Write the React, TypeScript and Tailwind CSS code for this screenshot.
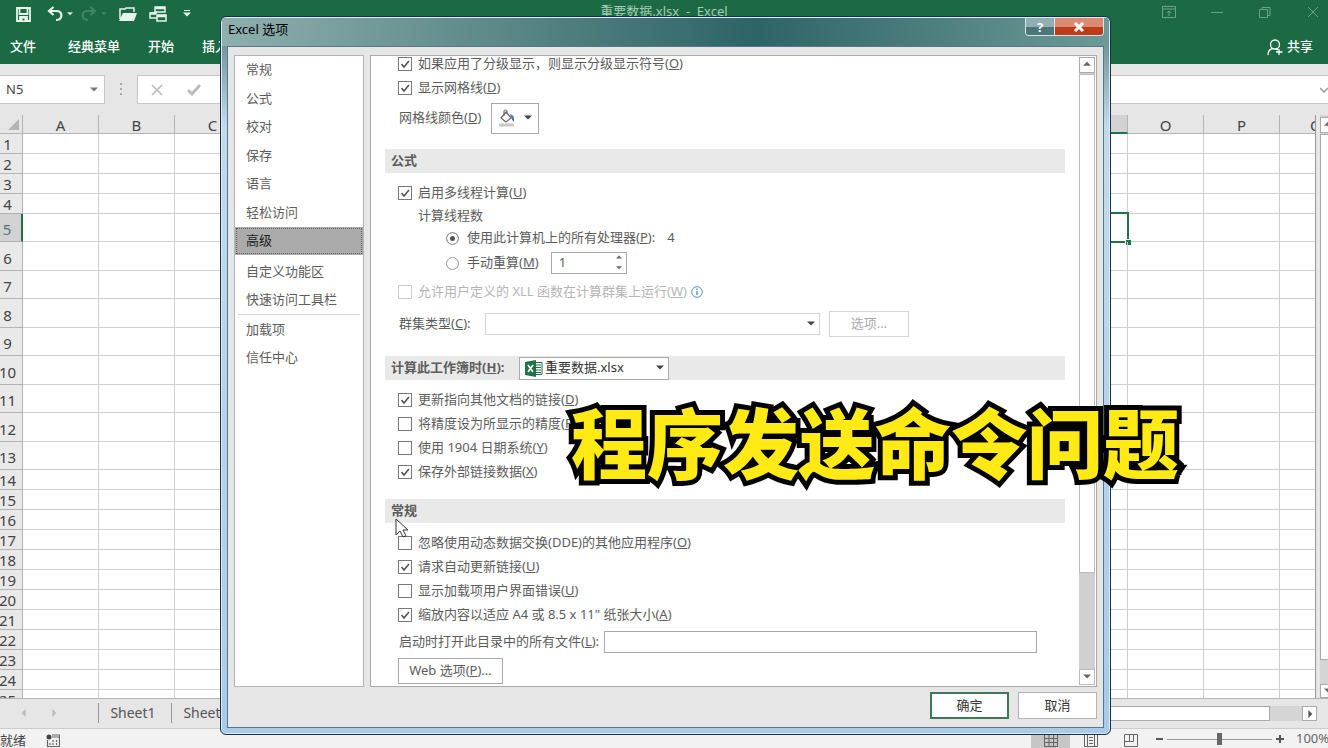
import { ReactNode } from "react";

const SHEET_ROWS = Array.from({ length: 25 }, (_, i) => i + 1);
const MIDDLE_COLUMNS = ["D", "E", "F", "G", "H", "I", "J", "K", "L", "M"];

const isTall = (row: number) => row >= 5 && row <= 13;

const rowHeight = (row: number) => {
  if (!isTall(row)) return "h-5";
  return row % 2 === 0 ? "h-[29px]" : "h-7";
};

const Triangle = ({ dir, className = "" }: { dir: "up" | "down" | "left" | "right"; className?: string }) => {
  const points = {
    up: "0,6 5,1 10,6",
    down: "0,2 10,2 5,7",
    left: "7,0 7,10 2,5",
    right: "3,0 3,10 8,5",
  };
  return (
    <svg viewBox="0 0 10 10" className={`size-2 shrink-0 fill-current ${className}`} aria-hidden="true">
      <polygon points={points[dir]} />
    </svg>
  );
};

const TitleBar = () => (
  <div className="flex h-7 items-center justify-between pl-4 text-[#e6f5ec]">
    <div className="flex items-center">
      <button aria-label="保存" className="mr-4">
        <svg width="15" height="15" viewBox="0 0 15 15" fill="none" stroke="currentColor" strokeWidth="1.8">
          <path d="M1 1h13v13H1zM3.5 1v6h8V1" />
          <path d="M4 10h7v4H4z" fill="currentColor" />
          <path d="M7.5 11.500v2" stroke="#1b6a43" />
        </svg>
      </button>
      <button aria-label="撤消" className="flex items-center gap-1">
        <svg width="16" height="16" viewBox="0 0 16 16" fill="none" stroke="currentColor" strokeWidth="2.200">
          <path d="M6.500 1L2 5l4.500 4M2 5h8c6 0 6 9-1 9" />
        </svg>
        <Triangle dir="down" className="size-[6px]" />
      </button>
      <button aria-label="恢复" className="ml-2 flex items-center gap-1 text-[#3f8762]">
        <svg width="16" height="16" viewBox="0 0 16 16" fill="none" stroke="currentColor" strokeWidth="2">
          <path d="M9.500 1L14 5 9.500 9M14 5H6c-6 0-6 9 1 9" />
        </svg>
        <Triangle dir="down" className="size-[6px]" />
      </button>
      <button aria-label="打开" className="ml-3">
        <svg width="18" height="15" viewBox="0 0 18 15">
          <path d="M1 12V2h5l1-1h8v4" fill="none" stroke="currentColor" strokeWidth="1.500" />
          <path d="M4 6h14l-3 8H0z" fill="currentColor" />
        </svg>
      </button>
      <button aria-label="切换窗口" className="ml-3">
        <svg width="18" height="16" viewBox="0 0 18 16" fill="none" stroke="currentColor" strokeWidth="1.500">
          <path d="M6 1h10v5H6zM8 9h9v6H8zM8 12H1V7h7" />
          <path d="M6 2h10M8 10h9M1 7.500h6" strokeWidth="2.500" />
        </svg>
      </button>
      <button aria-label="自定义快速访问工具栏" className="ml-4 flex flex-col items-center">
        <span className="h-px w-[6px] bg-current" />
        <Triangle dir="down" />
      </button>
    </div>
    <div className="flex items-center gap-[34px] pr-2 pb-1 text-[#6aa485]">
      <button aria-label="功能区显示选项">
        <svg width="14" height="12" viewBox="0 0 14 12" fill="none" stroke="currentColor">
          <path d="M.5.500h13v11H.5zM.5 3h13M7 10V5M5 7l2-2 2 2" />
        </svg>
      </button>
      <button aria-label="最小化">
        <svg width="14" height="12" viewBox="0 0 14 12" stroke="currentColor">
          <path d="M1 6.500h12" />
        </svg>
      </button>
      <button aria-label="还原">
        <svg width="14" height="12" viewBox="0 0 14 12" fill="none" stroke="currentColor">
          <path d="M1.500 3.500h8v8h-8zM4 3.500v-2h8v8H9.500" />
        </svg>
      </button>
      <button aria-label="关闭窗口">
        <svg width="14" height="12" viewBox="0 0 14 12" stroke="currentColor">
          <path d="M2 1l10 10M12 1L2 11" />
        </svg>
      </button>
    </div>
  </div>
);

const RibbonTabs = () => (
  <div className="flex h-9 items-center justify-between pt-[2px] pr-[15px] pl-[10px] text-[13px] font-medium text-white">
    <div className="flex items-center gap-7">
      <button className="mr-1">文件</button>
      <button>经典菜单</button>
      <button>开始</button>
      <button>插入</button>
    </div>
    <button className="flex items-center gap-1">
      <svg width="16" height="17" viewBox="0 0 16 17" fill="none" stroke="currentColor" strokeWidth="1.300">
        <circle cx="8" cy="5.500" r="4.500" />
        <path d="M1 16c0-4 2-6 5-6.500M9 10l2 1M12 10v6M9 13h6.500" />
      </svg>
      共享
    </button>
  </div>
);

const FormulaBar = () => (
  <div className="flex h-[51px] items-start bg-[#e6e6e6] pt-[11px]">
    <div className="flex h-[29px] w-[105px] items-center justify-between border border-l-0 border-[#c8c8c8] bg-white pr-[6px] pl-[6px]">
      <input aria-label="名称框" defaultValue="N5" className="w-16 text-[13px] text-[#444] outline-none" />
      <Triangle dir="down" className="text-[#777]" />
    </div>
    <svg width="32" height="29" viewBox="0 0 32 29" fill="#aaa" aria-hidden="true">
      <path d="M15 8h2v2h-2zM15 13h2v2h-2zM15 18h2v2h-2z" />
    </svg>
    <div className="flex h-[29px] flex-1 items-center border border-r-0 border-[#c8c8c8] bg-white pl-[13px] text-[#bbb]">
      <svg width="12" height="12" viewBox="0 0 12 12" stroke="currentColor" strokeWidth="1.600">
        <path d="M1 1l10 10M11 1L1 11" />
      </svg>
      <svg width="14" height="12" viewBox="0 0 14 12" fill="none" stroke="currentColor" strokeWidth="2.800" className="ml-6">
        <path d="M1 6l4 4 8-9" />
      </svg>
      <input aria-label="编辑栏" className="ml-4 min-w-0 flex-1 outline-none" />
      <svg width="8" height="8" viewBox="0 0 8 8" fill="none" stroke="#999" strokeWidth="1.500">
        <path d="M0 2l4 4 4-4" />
      </svg>
    </div>
  </div>
);

const columnHead = "border-r border-b border-[#b4b4b4] p-0 pt-[2px] text-center font-normal leading-none";
const cell = "border-r border-b border-[#cfcfcf] p-0";

const SheetGrid = () => (
  <div className="flex min-h-0 flex-1 bg-[#e6e6e6]">
    <div className="min-w-0 flex-1 overflow-hidden border-r border-[#999]">
      <table className="w-full table-fixed border-separate border-spacing-0 bg-white text-[15px] text-[#444]">
        <colgroup>
          <col className="w-[23px]" />
          <col className="w-[76px]" />
          <col className="w-[76px]" />
          <col className="w-[76px]" />
          {MIDDLE_COLUMNS.map((name) => (
            <col key={name} />
          ))}
          <col className="w-[76px]" />
          <col className="w-[76px]" />
          <col className="w-[76px]" />
          <col className="w-[35px]" />
        </colgroup>
        <thead>
          <tr className="h-[19px] bg-[#e6e6e6]">
            <th className="border-r border-b border-[#b4b4b4] p-0" aria-label="全选">
              <svg width="19" height="11" viewBox="0 0 19 11" fill="#b4b4b4">
                <path d="M19 0v11H8z" />
              </svg>
            </th>
            {["A", "B", "C", ...MIDDLE_COLUMNS].map((name) => (
              <th key={name} className={columnHead}>{name}</th>
            ))}
            <th className="border-r border-b-2 border-[#b4b4b4] border-b-[#217346] bg-[#d2d2d2] p-0 text-center leading-none font-normal text-[#217346]">
              N
            </th>
            <th className={columnHead}>O</th>
            <th className={columnHead}>P</th>
            <th className="overflow-hidden border-b border-[#b4b4b4] p-0 pt-[2px] pl-[30px] text-left leading-none font-normal">Q</th>
          </tr>
        </thead>
        <tbody>
          {SHEET_ROWS.map((row) => (
            <tr key={row} className={rowHeight(row)}>
              <th
                className={`border-b border-[#b4b4b4] p-0 pr-[7px] text-center align-bottom leading-4 font-normal ${
                  isTall(row) ? "pb-1" : "pb-px"
                } ${row === 5 ? "border-r-2 border-r-[#217346] bg-[#d2d2d2] text-[#4d7a70]" : "border-r bg-[#e9e9e9]"}`}
              >
                <span className="flex justify-center">{row}</span>
              </th>
              <td className={cell} />
              <td className={cell} />
              <td className={cell} />
              {MIDDLE_COLUMNS.map((name) => (
                <td key={name} className={cell} />
              ))}
              <td className={`${cell} relative`}>
                {row === 5 && (
                  <span className="absolute -inset-[2px] border-2 border-[#217346]">
                    <span className="absolute -right-[4px] -bottom-[4px] size-[6px] border-t border-l border-white bg-[#217346]" />
                  </span>
                )}
              </td>
              <td className={cell} />
              <td className={cell} />
              <td className="border-b border-[#cfcfcf] p-0" />
            </tr>
          ))}
        </tbody>
      </table>
    </div>
    <div className="ml-1 flex w-2 flex-col overflow-hidden bg-[#d5d5d5] pt-[2px] text-[#666]">
      <button aria-label="向上滚动" className="flex h-4 w-4 items-center justify-center border border-[#aaa] bg-white">
        <Triangle dir="up" />
      </button>
      <div className="mt-px flex-1 border border-r-0 border-[#aaa] bg-white" />
      <button aria-label="向下滚动" className="mt-6 flex h-[14px] w-4 items-center justify-center border border-[#aaa] bg-white">
        <Triangle dir="down" />
      </button>
    </div>
  </div>
);

const SheetTabs = () => (
  <div className="flex h-[30px] items-center justify-between border-t border-[#b4b4b4] bg-[#e6e6e6] text-sm text-[#555]">
    <div className="flex items-center pb-[2px]">
      <button aria-label="上一个工作表" className="ml-5 text-[#bbb]">
        <Triangle dir="left" />
      </button>
      <button aria-label="下一个工作表" className="mr-10 ml-[22px] text-[#bbb]">
        <Triangle dir="right" />
      </button>
      <button className="h-5 w-[73px] border-l border-[#999] pr-1 leading-5">Sheet1</button>
      <button className="h-5 w-[73px] border-l border-[#999] pr-1 leading-5">Sheet2</button>
    </div>
    <div className="mr-[11px] flex w-[400px] bg-[#d5d5d5]">
      <div className="h-[15px] flex-1 border border-[#aaa] bg-white" />
      <button aria-label="向右滚动" className="ml-8 flex h-[15px] w-[15px] items-center justify-center border border-[#aaa] bg-white text-[#555]">
        <Triangle dir="right" />
      </button>
    </div>
  </div>
);

const StatusBar = () => (
  <div className="flex h-5 items-center justify-between border-t border-[#ccc] bg-[#f2f2f2] text-[13px] text-[#444]">
    <div className="flex items-center gap-5 pt-1">
      <span>就绪</span>
      <svg width="14" height="13" viewBox="0 0 14 13" fill="none" stroke="#666" strokeWidth="1.200">
        <path d="M6 1h7.500v11.500H1.500V6M6 3h7" />
        <path d="M4 11V8M7 11V6M10.500 11V6" strokeDasharray="2 1" />
        <circle cx="3" cy="3" r="2.500" fill="#444" stroke="none" />
      </svg>
    </div>
    <div className="flex h-full items-center text-[#666]">
      <button aria-label="普通" className="flex h-full w-[39px] items-center justify-center bg-[#c6c6c6] pt-1">
        <svg width="14" height="13" viewBox="0 0 14 13" fill="none" stroke="currentColor">
          <path d="M.5.500h13v12H.5zM.5 4.500h13M.5 8.500h13M5 .5v12M9.500.500v12" />
        </svg>
      </button>
      <button aria-label="页面布局" className="ml-[14px] pt-1">
        <svg width="14" height="13" viewBox="0 0 14 13" fill="none" stroke="currentColor">
          <path d="M.5.500h13v12H.5zM3.500 1v11M10.500 1v11M5 3.500h4M5 6.500h4M5 9.500h4" />
        </svg>
      </button>
      <button aria-label="分页预览" className="ml-[26px] pt-1">
        <svg width="14" height="13" viewBox="0 0 14 13" fill="none" stroke="currentColor">
          <path d="M.5.500h13v12H.5zM5.500.500v7H.5M9.500.500v7h-4" />
        </svg>
      </button>
      <button aria-label="缩小" className="ml-[18px] h-[2px] w-[7px] bg-[#555]" />
      <svg width="105" height="12" viewBox="0 0 105 12" className="ml-1">
        <path d="M0 6.500h105" stroke="#999" />
        <path d="M50 0h5v12h-5z" fill="#666" />
      </svg>
      <button aria-label="放大" className="ml-1">
        <svg width="8" height="8" viewBox="0 0 8 8" stroke="#555" strokeWidth="2">
          <path d="M0 4h8M4 0v8" />
        </svg>
      </button>
      <span className="ml-3 w-8 overflow-hidden whitespace-nowrap">100%</span>
    </div>
  </div>
);

const NAV_GROUPS = [
  ["常规", "公式", "校对", "保存", "语言", "轻松访问", "高级"],
  ["自定义功能区", "快速访问工具栏"],
  ["加载项", "信任中心"],
];
const NAV_HEIGHTS = ["h-[199px] mb-[2px]", "h-[57px]", "h-[57px]"];

const CategoryNav = () => (
  <nav className="w-[130px] shrink-0 border border-[#b4b4b4] bg-white">
    {NAV_GROUPS.map((group, index) => (
      <div key={group[0]}>
        <div className={`flex flex-col ${NAV_HEIGHTS[index]}`}>
          {group.map((name) => (
            <button
              key={name}
              className={`flex-1 pl-[11px] text-left ${
                name === "高级" ? "bg-[#ababab] text-[#222] outline-1 -outline-offset-2 outline-[#666] outline-dotted" : ""
              }`}
            >
              {name}
            </button>
          ))}
        </div>
        {index === 1 && <hr className="mx-[3px] border-[#d4d4d4]" />}
      </div>
    ))}
  </nav>
);

const SectionHeader = ({ children, className = "" }: { children: ReactNode; className?: string }) => (
  <div className={`flex h-6 items-center bg-[#e9e9e9] pl-[6px] font-bold ${className}`}>{children}</div>
);

interface OptionProps {
  label: string;
  hotkey: string;
  checked?: boolean;
  disabled?: boolean;
  children?: ReactNode;
}

const CheckOption = ({ label, hotkey, checked, disabled, children }: OptionProps) => (
  <div className="flex h-6 items-center pl-[13px]">
    <label className={`flex items-center gap-[6px] ${disabled ? "text-[#b5b5b5]" : ""}`}>
      <span className="grid">
        <input
          type="checkbox"
          defaultChecked={checked}
          disabled={disabled}
          className="peer col-start-1 row-start-1 size-[14px] appearance-none border border-[#777] bg-white disabled:border-[#cfcfcf]"
        />
        <svg
          viewBox="0 0 14 14"
          fill="none"
          stroke="#555"
          strokeWidth="1.600"
          className="pointer-events-none invisible col-start-1 row-start-1 size-[14px] peer-checked:visible"
        >
          <path d="M3.500 7l2.500 3 5-6" />
        </svg>
      </span>
      <span>
        {label}(<u>{hotkey}</u>)
      </span>
    </label>
    {children}
  </div>
);

const ThreadRadio = ({ label, hotkey, suffix = "", checked }: { label: string; hotkey: string; suffix?: string; checked?: boolean }) => (
  <label className="flex items-center gap-2">
    <input
      type="radio"
      name="threads"
      defaultChecked={checked}
      className="size-[13px] appearance-none rounded-full border border-[#999] bg-white checked:bg-[#555] checked:shadow-[inset_0_0_0_3px_white]"
    />
    <span>
      {label}(<u>{hotkey}</u>){suffix}
    </span>
  </label>
);

const AdvancedOptions = () => (
  <div className="min-w-0 flex-1 overflow-hidden pr-[14px] pl-[14px] whitespace-nowrap">
    <div className="-mt-1 w-full">
      <CheckOption label="如果应用了分级显示，则显示分级显示符号" hotkey="O" checked />
      <CheckOption label="显示网格线" hotkey="D" checked />
      <div className="flex h-9 items-center gap-[10px] pl-[14px]">
        <span>
          网格线颜色(<u>D</u>)
        </span>
        <button aria-label="网格线颜色" className="flex h-[31px] w-12 items-center justify-center gap-2 border border-[#aaa]">
          <svg width="18" height="18" viewBox="0 0 18 18" fill="none">
            <path d="M8 3l5 6-5 4-5-4z" fill="white" stroke="#666" strokeWidth="1.200" />
            <path d="M6 7V2q0-1 1.500-1T9 2v3" stroke="#666" />
            <path d="M12 5q5 1 4 8-2-1-3-5z" fill="#4a78a8" />
            <path d="M1 14.500h15v3H1z" fill="#c9c9c9" />
          </svg>
          <Triangle dir="down" className="text-[#444]" />
        </button>
      </div>

      <SectionHeader className="mt-[13px] mb-2">公式</SectionHeader>
      <CheckOption label="启用多线程计算" hotkey="U" checked />
      <div className="flex h-[22px] items-center pl-[33px]">计算线程数</div>
      <div className="flex h-[22px] items-center gap-3 pl-[61px]">
        <ThreadRadio label="使用此计算机上的所有处理器" hotkey="P" suffix=":" checked />
        <span>4</span>
      </div>
      <div className="mb-[3px] flex h-7 items-center gap-3 pl-[61px]">
        <ThreadRadio label="手动重算" hotkey="M" />
        <div className="flex h-[22px] w-[76px] items-center border border-[#aaa] pr-1 pl-[7px]">
          <input aria-label="线程数" defaultValue="1" className="min-w-0 flex-1 outline-none" />
          <div className="flex flex-col gap-1 text-[#666]">
            <button aria-label="增加" className="flex">
              <Triangle dir="up" className="size-[6px]" />
            </button>
            <button aria-label="减少" className="flex">
              <Triangle dir="down" className="size-[6px]" />
            </button>
          </div>
        </div>
      </div>
      <CheckOption label="允许用户定义的 XLL 函数在计算群集上运行" hotkey="W" disabled>
        <svg width="12" height="12" viewBox="0 0 12 12" fill="none" stroke="#5b8db8" className="ml-1">
          <circle cx="6" cy="6" r="5.300" />
          <path d="M6 5v4M6 2.500V4" strokeWidth="1.400" />
        </svg>
      </CheckOption>
      <div className="mt-1 mb-4 flex h-8 items-center pl-[14px]">
        <label htmlFor="cluster" className="w-[86px]">
          群集类型(<u>C</u>):
        </label>
        <div className="flex h-[22px] w-[335px] items-center border border-[#d4d4d4] pr-1">
          <select id="cluster" className="h-full flex-1 appearance-none outline-none" />
          <Triangle dir="down" className="text-[#444]" />
        </div>
        <button disabled className="ml-[9px] h-[26px] w-20 border border-[#d4d4d4] text-[#aaa]">
          选项...
        </button>
      </div>

      <SectionHeader className="mb-2">
        <label htmlFor="workbook" className="w-[128px]">
          计算此工作簿时(<u>H</u>):
        </label>
        <div className="flex h-[23px] w-[150px] items-center border border-[#aaa] bg-white pr-1 pl-[5px] font-normal text-[#333]">
          <svg width="18" height="17" viewBox="0 0 18 17" fill="none">
            <path d="M9 2.500h8v12H9" fill="white" stroke="#217346" />
            <path d="M11 5h5M11 7.500h5M11 10h5M11 12.500h5" stroke="#217346" />
            <path d="M0 2l11-2v17L0 15z" fill="#217346" />
            <path d="M3 5l5 7M8 5l-5 7" stroke="white" strokeWidth="1.600" />
          </svg>
          <select id="workbook" className="h-full flex-1 appearance-none pl-[2px] outline-none">
            <option>重要数据.xlsx</option>
          </select>
          <Triangle dir="down" className="text-[#444]" />
        </div>
      </SectionHeader>
      <CheckOption label="更新指向其他文档的链接" hotkey="D" checked />
      <CheckOption label="将精度设为所显示的精度" hotkey="P" />
      <CheckOption label="使用 1904 日期系统" hotkey="Y" />
      <CheckOption label="保存外部链接数据" hotkey="X" checked />

      <SectionHeader className="mt-[15px] mb-2">常规</SectionHeader>
      <CheckOption label="忽略使用动态数据交换(DDE)的其他应用程序" hotkey="O" />
      <CheckOption label="请求自动更新链接" hotkey="U" checked />
      <CheckOption label="显示加载项用户界面错误" hotkey="U" />
      <CheckOption label='缩放内容以适应 A4 或 8.5 x 11" 纸张大小' hotkey="A" checked />
      <div className="flex h-[30px] items-center pr-7 pl-[14px]">
        <label htmlFor="startup" className="w-[205px]">
          启动时打开此目录中的所有文件(<u>L</u>):
        </label>
        <input id="startup" className="h-[22px] min-w-0 flex-1 border border-[#aaa] outline-none" />
      </div>
      <button className="mt-px ml-[13px] h-[26px] w-[105px] border border-[#aaa]">
        Web 选项(<u>P</u>)...
      </button>
    </div>
  </div>
);

const OptionsDialog = () => (
  <section
    role="dialog"
    aria-label="Excel 选项"
    className="absolute top-4 right-[217px] bottom-[13px] left-[220px] flex flex-col rounded-md border border-[#14304a] bg-[#b5d5ef] bg-linear-to-b from-[#56807f] from-0% via-[#c3daea] via-15% to-[#a9cbe8] px-[6px] pb-[6px] shadow-[inset_0_0_0_1px_#dcecf6] text-[13px] text-[#5c5c5c]"
  >
    <header className="-mx-[5px] mt-px flex h-7 items-start justify-between rounded-t bg-linear-to-r from-[#8eb0ae] via-[#2d6466] via-60% to-[#6d9a98] pr-[5px] pl-[6px]">
      <h1 className="pt-[2px] text-black">Excel 选项</h1>
      <div className="flex h-[18px] overflow-hidden rounded-b border border-t-0 border-[#d5e5e5]">
        <button aria-label="帮助" className="w-[29px] border-r border-[#d5e5e5] bg-linear-to-b from-[#92aeb0] from-50% to-[#4e7577] to-50% leading-4 font-bold text-white">
          ?
        </button>
        <button aria-label="关闭" className="flex w-12 items-center justify-center bg-linear-to-b from-[#dc8a72] from-50% to-[#c03a1c] to-50%">
          <svg width="12" height="10" viewBox="0 0 12 10" stroke="white" strokeWidth="3">
            <path d="M2 1l8 8M10 1L2 9" />
          </svg>
        </button>
      </div>
    </header>
    <div className="flex min-h-0 flex-1 flex-col border border-[#55778f] bg-[#e6e6e6] px-[6px] pt-2">
      <div className="flex min-h-0 flex-1 gap-[6px]">
        <CategoryNav />
        <div className="flex min-w-0 flex-1 border border-[#aaa] bg-white">
          <AdvancedOptions />
          <div className="my-px mr-px flex w-4 flex-col bg-[#d0d0d0] text-[#666]">
            <button aria-label="向上" className="flex h-4 items-center justify-center border border-[#aaa] bg-white">
              <Triangle dir="up" />
            </button>
            <div className="mt-px flex-1 border border-[#bbb] bg-white" />
            <button aria-label="向下" className="mt-24 flex h-4 items-center justify-center border border-[#bbb] bg-white">
              <Triangle dir="down" />
            </button>
          </div>
        </div>
      </div>
      <footer className="flex h-10 items-start justify-end gap-[9px] pt-[5px] text-[#333]">
        <button className="h-[27px] w-[79px] border-2 border-[#3c7a5a] bg-white">确定</button>
        <button className="h-[27px] w-[79px] border border-[#b4b4b4] bg-white">取消</button>
      </footer>
    </div>
  </section>
);

const App = () => {
  return (
    <main className="relative flex h-screen flex-col overflow-hidden bg-white font-['Noto_Sans','Noto_Sans_CJK_SC',sans-serif]">
      <header className="relative bg-[#1b6a43]">
        <p className="absolute inset-x-0 top-[2px] text-center text-[13px] whitespace-pre text-[#a5cbb6]">重要数据.xlsx  -  Excel</p>
        <TitleBar />
        <RibbonTabs />
      </header>
      <FormulaBar />
      <SheetGrid />
      <SheetTabs />
      <StatusBar />

      <OptionsDialog />
      <p className="absolute top-[385px] left-[571px] font-['Noto_Sans_CJK_SC',sans-serif] text-[76px] leading-[110px] font-black whitespace-nowrap text-[#ffea16] [-webkit-text-stroke:10px_black] [paint-order:stroke_fill]">
        程序发送命令问题
      </p>
      <svg width="14" height="20" viewBox="0 0 14 20" className="absolute top-[518px] left-[395px]" aria-hidden="true">
        <path d="M1 1v16l4-4 3 6 3-1-3-6h5z" fill="white" stroke="#333" />
      </svg>
    </main>
  );
};

export default App;
